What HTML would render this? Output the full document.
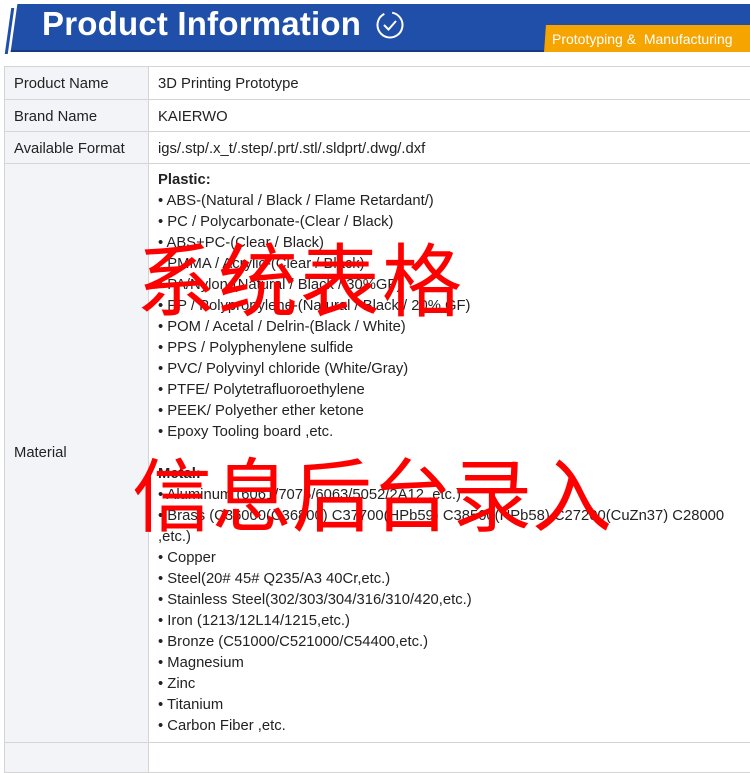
<!DOCTYPE html>
<html><head><meta charset="utf-8"><style>
body{margin:0;width:750px;height:771px;background:#fff;position:relative;overflow:hidden;font-family:"Liberation Sans","Noto Sans CJK SC",sans-serif;color:#222}
.hdr{position:absolute;left:14px;top:4px;width:740px;height:46px;background:#1f4fa8;transform:skewX(-8deg);border-bottom:2px solid #163a80}
.hl{position:absolute;left:8px;top:8px;width:3px;height:46px;background:#1f4fa8;transform:skewX(-8deg)}
.title{position:absolute;left:42px;top:5px;font-size:33px;font-weight:bold;color:#fff;letter-spacing:0.2px}
.org{position:absolute;left:545px;top:25px;width:215px;height:27px;background:#f5a400;transform:skewX(-4deg)}
.orgt{position:absolute;left:552px;top:31px;font-size:14px;color:#fff}
table{position:absolute;left:4px;top:66px;border-collapse:collapse;width:760px;font-size:14.8px}
td{border:1px solid #d4d4d4;padding:0 9px;vertical-align:middle;box-sizing:border-box}
td.l{background:#f3f4f8;width:144px}
.mat{height:579px;vertical-align:top;padding-top:6px;line-height:21px}
.red{position:absolute;color:#f00;font-size:80px;line-height:1;font-family:"Noto Sans CJK SC",sans-serif}
</style></head><body>
<div class="hl"></div>
<div class="hdr"></div>
<div class="title">Product Information</div>
<svg style="position:absolute;left:375px;top:10px" width="30" height="30" viewBox="0 0 30 30"><circle cx="15" cy="15" r="12.5" fill="none" stroke="#fff" stroke-width="2" stroke-dasharray="70 8" transform="rotate(-80 15 15)"/><path d="M9 15l4.5 4.5L21 11" fill="none" stroke="#fff" stroke-width="2"/></svg>
<div class="org"></div>
<div class="orgt">Prototyping &amp;&nbsp; Manufacturing</div>
<table>
<tr style="height:33px"><td class="l" style="padding-top:2px">Product Name</td><td style="padding-top:2px">3D Printing Prototype</td></tr>
<tr style="height:32px"><td class="l" style="padding-top:2px">Brand Name</td><td style="padding-top:2px">KAIERWO</td></tr>
<tr style="height:32px"><td class="l" style="padding-top:2px">Available Format</td><td style="padding-top:2px">igs/.stp/.x_t/.step/.prt/.stl/.sldprt/.dwg/.dxf</td></tr>
<tr><td class="l">Material</td><td class="mat"><b>Plastic:</b><br>• ABS-(Natural / Black / Flame Retardant/)<br>• PC / Polycarbonate-(Clear / Black)<br>• ABS+PC-(Clear / Black)<br>• PMMA / Acrylic-(Clear / Black)<br>• PA/Nylon-(Natural / Black / 30%GF)<br>• PP / Polypropylene-(Natural / Black / 20% GF)<br>• POM / Acetal / Delrin-(Black / White)<br>• PPS / Polyphenylene sulfide<br>• PVC/ Polyvinyl chloride (White/Gray)<br>• PTFE/ Polytetrafluoroethylene<br>• PEEK/ Polyether ether ketone<br>• Epoxy Tooling board ,etc.<br><br><b>Metal:</b><br>• Aluminum (6061/7075/6063/5052/2A12 ,etc.)<br>• Brass (C36000(C36800) C37700(HPb59) C38500(HPb58) C27200(CuZn37) C28000<br>,etc.)<br>• Copper<br>• Steel(20# 45# Q235/A3 40Cr,etc.)<br>• Stainless Steel(302/303/304/316/310/420,etc.)<br>• Iron (1213/12L14/1215,etc.)<br>• Bronze (C51000/C521000/C54400,etc.)<br>• Magnesium<br>• Zinc<br>• Titanium<br>• Carbon Fiber ,etc.</td></tr>
<tr><td class="l" style="height:30px"></td><td></td></tr>
</table>
<div class="red" style="left:136px;top:236px;letter-spacing:2px">系统表格</div>
<div class="red" style="left:132px;top:451px">信息后台录入</div>
</body></html>
